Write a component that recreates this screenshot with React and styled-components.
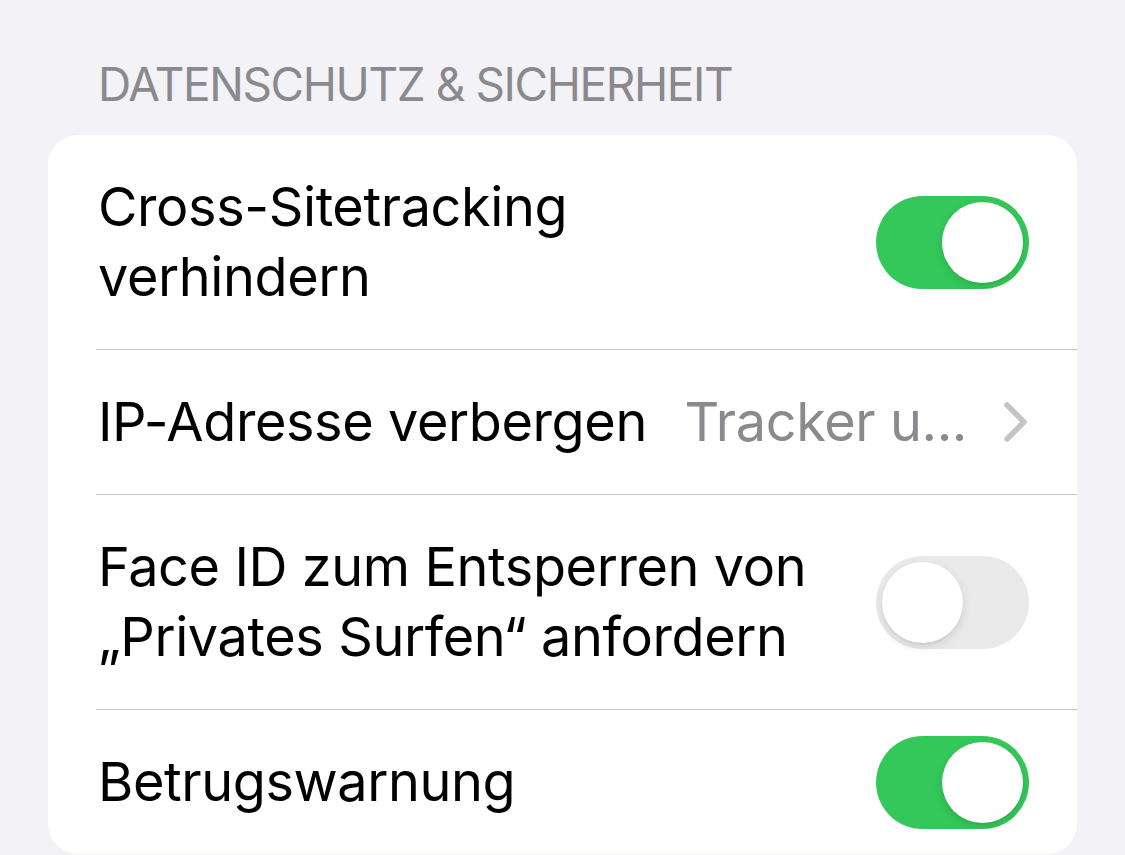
import React from "react";
import styled, { createGlobalStyle } from "styled-components";

const GlobalStyle = createGlobalStyle`
  html, body {
    margin: 0;
    padding: 0;
    background: #f2f2f7;
  }
  body {
    font-family: Inter, "Liberation Sans", sans-serif;
    -webkit-font-smoothing: antialiased;
  }
`;

const Page = styled.div`
  min-height: 855px;
  background: #f2f2f7;
  padding-top: 56px;
  box-sizing: border-box;
`;

const SectionHeader = styled.div`
  margin: 0 0 0 98px;
  height: 79px;
  font-size: 46px;
  line-height: 56px;
  color: #8a8a8e;
  letter-spacing: -1.4px;
  text-transform: uppercase;
  white-space: nowrap;
`;

const Card = styled.div`
  margin: 0 48px;
  background: #ffffff;
  border-radius: 30px;
  overflow: hidden;
`;

const Row = styled.div`
  padding-left: 48px;
`;

const RowContent = styled.div`
  display: flex;
  align-items: center;
  justify-content: space-between;
  padding: 25px 48px 25px 2px;
  border-bottom: ${(p) => (p.$last ? "none" : "1.5px solid #c8c8cc")};
`;

const Label = styled.div`
  font-size: 54px;
  line-height: 70px;
  padding: 12px 0;
  letter-spacing: -0.4px;
  color: #000;
  flex: 1 1 auto;
  min-width: 0;
  white-space: nowrap;
`;

const Trailing = styled.div`
  display: flex;
  align-items: center;
  flex: 0 0 auto;
  margin-left: 24px;
`;

const Value = styled.span`
  font-size: 54px;
  line-height: 70px;
  letter-spacing: -0.4px;
  color: #8a8a8e;
  margin-right: 36px;
  white-space: nowrap;
`;

const Track = styled.div`
  width: 153px;
  height: 93px;
  border-radius: 47px;
  background: ${(p) => (p.$on ? "#34c759" : "#e9e9ea")};
  display: flex;
  align-items: center;
  justify-content: ${(p) => (p.$on ? "flex-end" : "flex-start")};
  padding: 0 6px;
  box-sizing: border-box;
`;

const Knob = styled.div`
  width: 81px;
  height: 81px;
  border-radius: 50%;
  background: #fff;
  box-shadow: 0 4px 10px rgba(0, 0, 0, 0.1), 0 2px 1px rgba(0, 0, 0, 0.04);
`;

const Chevron = () => (
  <svg width="26" height="42" viewBox="0 0 26 42" fill="none">
    <path
      d="M4 4 L21 21 L4 38"
      stroke="#c4c4c7"
      strokeWidth="5.5"
      strokeLinecap="round"
      strokeLinejoin="round"
    />
  </svg>
);

const Toggle = ({ on }) => (
  <Track $on={on}>
    <Knob />
  </Track>
);

export default function App() {
  return (
    <>
      <GlobalStyle />
      <Page>
        <SectionHeader>Datenschutz &amp; Sicherheit</SectionHeader>
        <Card>
          <Row>
            <RowContent>
              <Label>
                Cross-Sitetracking
                <br />
                verhindern
              </Label>
              <Trailing>
                <Toggle on />
              </Trailing>
            </RowContent>
          </Row>
          <Row>
            <RowContent>
              <Label>IP-Adresse verbergen</Label>
              <Trailing>
                <Value>Tracker u...</Value>
                <Chevron />
              </Trailing>
            </RowContent>
          </Row>
          <Row>
            <RowContent>
              <Label>
                Face ID zum Entsperren von
                <br />
                „Privates Surfen“ anfordern
              </Label>
              <Trailing>
                <Toggle on={false} />
              </Trailing>
            </RowContent>
          </Row>
          <Row>
            <RowContent $last>
              <Label>Betrugswarnung</Label>
              <Trailing>
                <Toggle on />
              </Trailing>
            </RowContent>
          </Row>
        </Card>
      </Page>
    </>
  );
}
